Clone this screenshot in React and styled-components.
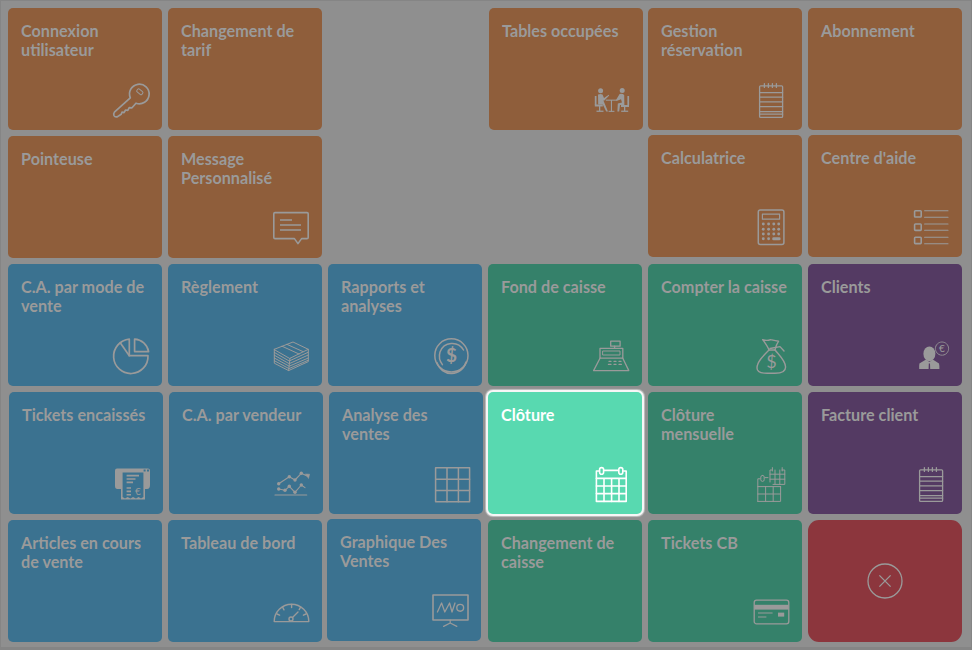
import React from "react";
import styled, { createGlobalStyle } from "styled-components";

const Global = createGlobalStyle`
  html, body { margin: 0; padding: 0; background: #8f8f8f; }
  body { font-family: "Lato", "Liberation Sans", sans-serif; }
  #root { width: 972px; height: 650px; overflow: hidden; }
`;

const COLORS = {
  brown: "#8f5e3b",
  blue: "#3b7290",
  green: "#35816a",
  purple: "#543a63",
  red: "#8c363d",
  active: "#58d9b0",
};

const Frame = styled.main`
  box-sizing: border-box;
  width: 972px;
  height: 650px;
  background: #8f8f8f;
  border-style: solid;
  border-color: #858585;
  border-width: 1px 1px 3px 1px;
  padding: 7px 9px 0 7px;
`;

const Board = styled.div`
  display: grid;
  grid-template-columns: repeat(6, 154px);
  grid-template-rows: repeat(5, 122px);
  gap: 6px;
`;

const Tile = styled.button`
  box-sizing: border-box;
  display: flex;
  flex-direction: column;
  justify-content: space-between;
  align-items: stretch;
  min-width: 0;
  border: 0;
  margin: ${(p) => p.$dy || 0}px ${(p) => -(p.$dx || 0)}px ${(p) => -(p.$dy || 0)}px ${(p) => p.$dx || 0}px;
  padding: 13px 13px 12px 13px;
  border-radius: 5px;
  background: ${(p) => COLORS[p.$tone]};
  color: #9a9a9a;
  text-align: left;
  font-family: inherit;
  ${(p) => p.$active && `color:#fff; box-shadow: 0 0 0 2px #f6f6f6, 0 0 1px 3px rgba(255,255,255,.45);`}
`;

const CloseTile = styled(Tile)`
  border-radius: 11px;
  justify-content: center;
  align-items: center;
  padding: 0;
`;

const Spacer = styled.div``;

const Label = styled.span`
  display: block;
  font-size: 16.2px;
  font-weight: 700;
  line-height: 19px;
  white-space: pre-line;
`;

const IconBox = styled.svg`
  display: block;
  align-self: flex-end;
  width: 36px;
  height: 36px;
  fill: none;
  stroke: currentColor;
  stroke-width: 1.3;
  stroke-linecap: round;
  stroke-linejoin: round;
  overflow: visible;
`;

const Ico = ({ children }) => <IconBox viewBox="0 0 36 36">{children}</IconBox>;

const Key = () => (
  <Ico>
    <g strokeWidth="1.7">
      <path d="M17.3 15.8 L1.4 30.2 Q0.2 31.6 1 33.6 Q2.2 35.6 4.6 34.6 L8.2 32.2 L9 30.2 L11 30.6 L12.6 28 L14.8 28.4 L16.2 25.6 L19 25.8 L23 21.2 A9.8 9.8 0 1 0 17.3 15.8 Z" />
      <rect x="-3.2" y="-1.8" width="6.4" height="3.6" rx="1.2" transform="translate(26.8 9.8) rotate(40)" strokeWidth="1" />
    </g>
  </Ico>
);

const Meeting = () => (
  <Ico>
    <g fill="currentColor" stroke="none">
      <circle cx="6.6" cy="8.8" r="2.5" />
      <circle cx="28.2" cy="8.4" r="2.5" />
      <path d="M4 12.5 Q6.5 11.4 8.5 12.5 L10 16 L14.8 12.8 L15.2 13.6 L10.4 18.6 H9.4 L14 29.6 H12.2 L8.8 22.6 H4.2 Z" />
      <path d="M25.6 12 Q28.5 11.2 30.2 13 L30.4 23 H26 L25.2 29.6 H23.4 L23.8 21.4 L28 20.6 L27 17.2 L22.6 19 L22 18 Z" />
      <rect x="0.8" y="14" width="1.7" height="9" />
      <rect x="33.4" y="14" width="1.7" height="9" />
      <rect x="0.8" y="22.5" width="8" height="2" />
      <rect x="27" y="23" width="8" height="2" />
      <rect x="5" y="24" width="1.3" height="5" />
      <rect x="30" y="24" width="1.3" height="5" />
      <rect x="2.5" y="28.6" width="7" height="1.3" />
      <rect x="27.2" y="28.6" width="7" height="1.3" />
      <rect x="11.8" y="17.6" width="11" height="1.1" />
      <rect x="16.9" y="18" width="1.1" height="11.6" />
      <rect x="14.6" y="28.8" width="5.8" height="1.1" />
    </g>
  </Ico>
);

const Notepad = () => (
  <Ico>
    <rect x="6.6" y="3.8" width="23" height="31.6" rx="1" />
    <path d="M11.4 1.6V5.4M15.4 1.6V5.4M19.4 1.6V5.4M23.4 1.6V5.4" />
    <path d="M6.6 10.6H29.6M6.6 15.2H29.6M6.6 19.8H29.6M6.6 24.6H29.6M6.6 29.6H29.6M6.6 32.2H29.6" />
  </Ico>
);

const Message = () => (
  <Ico>
    <path d="M2 2.6 H34 Q35.2 2.6 35.2 3.8 V27.4 Q35.2 28.6 34 28.6 H28.6 L25 33.6 L21.4 28.6 H2 Q0.8 28.6 0.8 27.4 V3.8 Q0.8 2.6 2 2.6 Z" strokeWidth="1.6" />
    <path d="M7 10H19M7 15H28M7 20H28" strokeWidth="1.6" strokeLinecap="butt" />
  </Ico>
);

const Calculator = () => (
  <Ico>
    <rect x="5.3" y="1" width="25.6" height="34.6" rx="2" strokeWidth="1.5" />
    <rect x="9.4" y="5.2" width="17.2" height="5" strokeWidth="1.2" />
    <g fill="currentColor" stroke="none">
      {[15, 20.2, 25, 29.8].map((y) =>
        [10.3, 15.6, 20.8, 25.7].map((x) =>
          y === 29.8 && x === 25.7 ? null : y === 29.8 && x === 20.8 ? (
            <rect key={x + "-" + y} x="19.2" y={y - 1.5} width="8.4" height="3" rx="1.4" />
          ) : (
            <circle key={x + "-" + y} cx={x} cy={y} r="1.45" />
          )
        )
      )}
    </g>
  </Ico>
);

const Checklist = () => (
  <Ico>
    <rect x="1.6" y="1.8" width="6.6" height="6.2" rx="0.8" strokeWidth="1.6" />
    <rect x="1.6" y="15" width="6.6" height="6.4" rx="0.8" strokeWidth="1.6" />
    <rect x="1.6" y="28.2" width="6.6" height="6.4" rx="0.8" strokeWidth="1.6" />
    <path d="M11.6 1.8H35M11.6 8.2H35M11.6 15H35M11.6 21.2H35M11.6 28.2H35M11.6 34.8H35" strokeWidth="1.1" />
  </Ico>
);

const Pie = () => (
  <Ico>
    <g strokeWidth="1.7">
      <path d="M35 17.7 A17.2 17.2 0 1 1 16.3 1.2 V17.7 Z" />
      <path d="M16.3 17.7 L7.4 5" />
      <path d="M21.6 1.2 A15 15 0 0 1 35.6 13.6 H21.6 Z" />
    </g>
  </Ico>
);

const Money = () => (
  <Ico>
    <g strokeWidth="1">
      <path d="M1.3 11.3 L20 4 L35.3 11.3 L17 20.3 Z" />
      <path d="M1.3 11.3 V25.2 L15.6 32.6 L35.3 23.6 V11.3" />
      <path d="M9 8.2 L26 16 M14 6.4 L30 13.6" />
      <path d="M1.3 14.4 L16.2 23 L35.3 14.2 M1.3 17.2 L16.2 25.7 L35.3 17 M1.3 20 L16.2 28.2 L35.3 20 M1.3 22.7 L16 30.6 L35.3 22.2" />
      <path d="M17 20.3 L15.6 32.6" />
    </g>
  </Ico>
);

const CoinGlyph = styled.text`
  font-family: "Lato", sans-serif;
  font-size: ${(p) => p.$size}px;
  font-weight: ${(p) => p.$weight || 700};
  fill: currentColor;
  stroke: none;
  text-anchor: middle;
`;

const Coin = () => (
  <Ico>
    <g strokeWidth="1.5">
      <circle cx="18.4" cy="17.4" r="16.6" />
      <path d="M4 24.6 A15 15 0 0 0 33 24" />
      <path d="M30.5 12 A13 13 0 0 0 7 14 A14 14 0 0 0 9.4 26.6" />
    </g>
    <CoinGlyph x="18.6" y="24" $size="19">$</CoinGlyph>
  </Ico>
);

const Register = () => (
  <Ico>
    <g strokeWidth="1.3">
      <rect x="17.7" y="3.2" width="9.4" height="5" />
      <path d="M21.6 8.2V10.4" />
      <rect x="7" y="10.4" width="22.8" height="9.8" />
      <rect x="10" y="13" width="17" height="4" strokeWidth="1" />
      <path d="M7 20.2 L0.6 32.6 H35.8 L29.8 20.2" />
      <path d="M16 23.4H18M21 23.4H23M26 23.4H28M15.4 26.4H18M21 26.4H23M26 26.4H28.4" strokeWidth="1.2" />
    </g>
  </Ico>
);

const MoneyBag = () => (
  <Ico>
    <g strokeWidth="1.4">
      <path d="M16 12 C10 18 4 24 4 30 C4 34 8 35.3 14 35.3 H22 C28 35.3 32.6 34 32.6 29 C32.6 23 27 18 22 12" />
      <path d="M16 12 C15 9 12 5 9.7 1.6 C13 2.8 15 2.8 17.5 1.6 C20 2.2 22 2.8 25.6 3.2 C24 5.4 23 8 22 12 Z" />
      <path d="M17 10.5 L27 8.6 L31 13" />
    </g>
    <CoinGlyph x="18.6" y="30" $size="18" $weight="400">$</CoinGlyph>
  </Ico>
);

const Client = () => (
  <Ico>
    <g fill="currentColor" stroke="none">
      <ellipse cx="16.4" cy="15.8" rx="6" ry="7.4" />
      <path d="M13 21.4 L6.4 25.4 Q6 28 6.2 31 H15.6 L15.8 25.4 H17 L17.2 31 H26.4 Q26.6 28 26 25.4 L19.8 21.4 L16.4 24 Z" />
    </g>
    <circle cx="29" cy="10.6" r="6.6" strokeWidth="0.9" strokeDasharray="1.6 0.9" />
    <CoinGlyph x="29" y="14" $size="10" $weight="400">€</CoinGlyph>
  </Ico>
);

const Receipt = () => (
  <Ico>
    <path fill="currentColor" stroke="none" d="M3 2.4 H34 Q36 2.4 36 4.4 V19 Q36 23 33 23 H31 V33.4 H7 V23 H3.4 Q1 23 1 20 V4.4 Q1 2.4 3 2.4 Z" />
    <path fill="#3b7290" stroke="none" d="M8.6 6.6 H29.4 V31 L27 32.4 L24.6 31 L22 32.4 L19 31 L16.4 32.4 L13.6 31 L11 32.4 L8.6 31 Z" />
    <path fill="#3b7290" stroke="none" d="M29.6 3.4h2v2h-2zM33 3.4h2v2h-2z" />
    <path d="M12.6 9.6H25M12.6 13H21.5M12.6 16.4H19M12.6 22H17M12.6 25.4H17M12.6 28.8H17" strokeWidth="1.6" strokeLinecap="butt" />
    <CoinGlyph x="24" y="29" $size="10" $weight="400">€</CoinGlyph>
  </Ico>
);

const Trend = () => (
  <Ico>
    <path d="M1 29H32.7" strokeWidth="1.1" />
    <path d="M4.7 17.7 L15.3 10.7 L21 14 L27.3 7.3 L33.6 10.2" strokeWidth="1.1" />
    <path d="M4.7 23 L11 24.3 L15.3 20.3 L21 26.3 L27.3 19 L31 21.6" strokeWidth="1.1" />
    <path d="M31.6 8 L35.6 8.2 L34.6 12.2 Z" fill="currentColor" strokeWidth="0.5" />
    <g fill="currentColor" stroke="none">
      {[[4.7, 17.7], [15.3, 10.7], [21, 14], [27.3, 7.3], [4.7, 23], [11, 24.3], [15.3, 20.3], [21, 26.3], [27.3, 19]].map(([x, y]) => (
        <circle key={x + "-" + y} cx={x} cy={y} r="1.7" />
      ))}
    </g>
  </Ico>
);

const GridIcon = () => (
  <Ico>
    <g strokeWidth="1.5">
      <rect x="1.6" y="1.8" width="34" height="34" />
      <path d="M13 1.8V35.8M24.4 1.8V35.8M1.6 13.2H35.6M1.6 24.6H35.6" />
    </g>
  </Ico>
);

const Calendar = () => (
  <Ico>
    <g strokeWidth="1.6">
      <path d="M6 5H3.4V35.4H33.2V5H30.6" />
      <path d="M11.2 4.4H25.4" />
      <rect x="6.6" y="1.6" width="4" height="6.6" rx="2" />
      <rect x="25.8" y="1.6" width="4" height="6.6" rx="2" />
      <path d="M3.4 12.4H33.2M3.4 20H33.2M3.4 27.6H33.2M11 12.4V35.4M18.6 12.4V35.4M26 12.4V35.4" />
    </g>
  </Ico>
);

const DoubleCalendar = () => (
  <Ico>
    <g strokeWidth="1">
      <path d="M17 16V4H18.6M29 4H31.8V18.4H20" />
      <path d="M17 8.2H31.8M17 13.2H31.8M22 4V18.4M26.8 4V18.4M19.4 1.6V5M29.2 1.6V5" />
      <path d="M4.8 35.4V12.8H7M4.8 20.6H27.6M4.8 28H27.6M4.8 35.4H27.6V20.6M12.6 20.6V35.4M20.2 20.6V35.4M12 11.6H15" />
      <rect x="7.8" y="9.4" width="3.4" height="6" rx="1.7" />
    </g>
  </Ico>
);

const Gauge = () => (
  <Ico>
    <g strokeWidth="1.4">
      <path d="M1.2 27.6 A17.3 17.3 0 0 1 35.8 27.6 Z" />
      <circle cx="18" cy="25" r="2" />
      <path d="M19.5 23.5 L25 18" />
      <path d="M18.6 10.4V13.6M9.6 13.2L11 15.8M27.6 13.2L26.2 15.6M4 20L6.6 21.2M33 20L30.4 21.2" />
    </g>
  </Ico>
);

const Board2 = () => (
  <Ico>
    <g strokeWidth="1.6">
      <rect x="1" y="2" width="35" height="25" />
      <path d="M5.4 19 L9.6 10 L12.8 19 L17.6 10 L20 19 L23 10" strokeWidth="1.3" />
      <circle cx="28.2" cy="14.8" r="3.4" strokeWidth="1.4" />
      <path d="M18.2 27V30 M18.2 30 L11.6 33.4 M18.2 30 L24.8 33.4" strokeWidth="1.2" />
    </g>
  </Ico>
);

const Card = () => (
  <Ico>
    <rect x="1.2" y="6.2" width="34.6" height="23.6" rx="2.4" strokeWidth="1.3" />
    <rect x="1.2" y="10.8" width="34.6" height="4.8" fill="currentColor" stroke="none" />
    <path d="M5.4 19H19.2M5.4 23H13" strokeWidth="1" />
    <rect x="25" y="18.6" width="6.2" height="4" fill="currentColor" stroke="none" />
  </Ico>
);

const CloseIcon = styled.svg`
  width: 36px;
  height: 36px;
  display: block;
  fill: none;
  stroke: #9a9a9a;
  stroke-width: 1.3;
`;

const ROWS = [
  [
    { t: "Connexion\nutilisateur", c: "brown", I: Key },
    { t: "Changement de\ntarif", c: "brown" },
    null,
    { t: "Tables occupées", c: "brown", I: Meeting, dx: 1 },
    { t: "Gestion\nréservation", c: "brown", I: Notepad },
    { t: "Abonnement", c: "brown" },
  ],
  [
    { t: "Pointeuse", c: "brown" },
    { t: "Message\nPersonnalisé", c: "brown", I: Message },
    null,
    null,
    { t: "Calculatrice", c: "brown", I: Calculator, dy: -1 },
    { t: "Centre d'aide", c: "brown", I: Checklist, dy: -1 },
  ],
  [
    { t: "C.A. par mode de\nvente", c: "blue", I: Pie },
    { t: "Règlement", c: "blue", I: Money },
    { t: "Rapports et\nanalyses", c: "blue", I: Coin },
    { t: "Fond de caisse", c: "green", I: Register },
    { t: "Compter la caisse", c: "green", I: MoneyBag },
    { t: "Clients", c: "purple", I: Client },
  ],
  [
    { t: "Tickets encaissés", c: "blue", I: Receipt, dx: 1 },
    { t: "C.A. par vendeur", c: "blue", I: Trend, dx: 1 },
    { t: "Analyse des\nventes", c: "blue", I: GridIcon, dx: 1 },
    { t: "Clôture", c: "active", I: Calendar, active: true },
    { t: "Clôture\nmensuelle", c: "green", I: DoubleCalendar },
    { t: "Facture client", c: "purple", I: Notepad },
  ],
  [
    { t: "Articles en cours\nde vente", c: "blue" },
    { t: "Tableau de bord", c: "blue", I: Gauge },
    { t: "Graphique Des\nVentes", c: "blue", I: Board2, dx: -1, dy: -1 },
    { t: "Changement de\ncaisse", c: "green" },
    { t: "Tickets CB", c: "green", I: Card },
    { close: true },
  ],
];

export default function App() {
  return (
    <>
      <Global />
      <Frame>
        <Board>
          {ROWS.flat().map((it, i) => {
            if (!it) return <Spacer key={i} />;
            if (it.close)
              return (
                <CloseTile key={i} $tone="red" aria-label="Fermer">
                  <CloseIcon viewBox="0 0 36 36">
                    <circle cx="18" cy="18" r="17" />
                    <path d="M12.4 12.4L23.6 23.6M23.6 12.4L12.4 23.6" />
                  </CloseIcon>
                </CloseTile>
              );
            const { I } = it;
            return (
              <Tile key={i} $tone={it.c} $dx={it.dx} $dy={it.dy} $active={it.active}>
                <Label>{it.t}</Label>
                {I ? <I /> : null}
              </Tile>
            );
          })}
        </Board>
      </Frame>
    </>
  );
}
